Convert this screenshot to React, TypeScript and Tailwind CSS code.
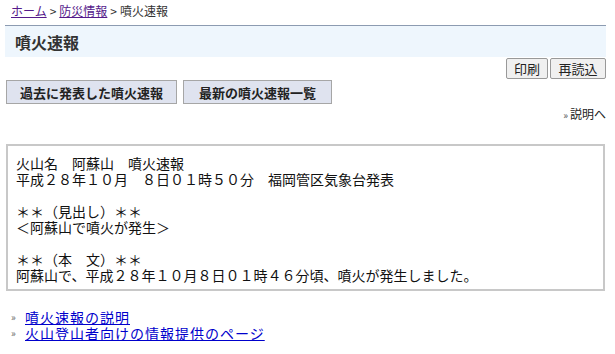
import React from "react";

const jp = "font-['Noto_Sans_CJK_JP','Noto_Sans',sans-serif]";

const App: React.FC = () => {
  return (
    <div className={`w-[615px] h-[354px] bg-white overflow-hidden ${jp}`}>
      <div className="w-[601px] ml-[5px]">
        {/* breadcrumb */}
        <div className="h-[25px] pt-[3px] pl-[6px] text-[12px] leading-[16px] text-[#333]">
          <a href="#" className="text-[#551a8b] underline">ホーム</a>
          <span className="mx-[3px]">&gt;</span>
          <a href="#" className="text-[#551a8b] underline">防災情報</a>
          <span className="mx-[3px]">&gt;</span>
          <span>噴火速報</span>
        </div>

        {/* title */}
        <div className="h-[32px] border-t border-[#8c9bb1] bg-[#eef6fd] flex items-center pl-[10px]">
          <h1 className="text-[16px] font-bold text-[#333] leading-none">噴火速報</h1>
        </div>

        {/* print / reload */}
        <div className="flex justify-end gap-[2px] mt-[1px]">
          <button className="h-[21px] w-[42px] border border-[#999] bg-[#f0f0f0] text-[13px] leading-none text-[#222] rounded-[2px]">
            印刷
          </button>
          <button className="h-[21px] w-[56px] border border-[#999] bg-[#f0f0f0] text-[13px] leading-none text-[#222] rounded-[2px]">
            再読込
          </button>
        </div>

        {/* history buttons */}
        <div className="flex gap-[6px] mt-[1px] ml-[1px]">
          <button className="h-[24px] w-[171px] border border-[#a6a6a6] bg-[#dfe3ef] text-[13px] font-bold leading-none text-[#222]">
            過去に発表した噴火速報
          </button>
          <button className="h-[24px] w-[149px] border border-[#a6a6a6] bg-[#dfe3ef] text-[13px] font-bold leading-none text-[#222]">
            最新の噴火速報一覧
          </button>
        </div>

        <div className="flex justify-end items-center mt-[2px] h-[16px] text-[12px] text-[#222]">
          <span className="text-[10px] text-[#555] mr-[2px]">»</span>
          <span>説明へ</span>
        </div>

        {/* bulletin */}
        <div className="mt-[22px] ml-[1px] w-[599px] h-[147px] border-2 border-[#c8c8c8] pt-[9px] pl-[8px] text-[14px] leading-[16px] text-[#111] whitespace-pre">
          <p>火山名　阿蘇山　噴火速報</p>
          <p>平成２８年１０月　８日０１時５０分　福岡管区気象台発表</p>
          <p>&nbsp;</p>
          <p>＊＊（見出し）＊＊</p>
          <p>＜阿蘇山で噴火が発生＞</p>
          <p>&nbsp;</p>
          <p>＊＊（本　文）＊＊</p>
          <p>阿蘇山で、平成２８年１０月８日０１時４６分頃、噴火が発生しました。</p>
        </div>

        {/* links */}
        <ul className="mt-[18px] ml-[6px] text-[14px] leading-[16px] tracking-[1px]">
          <li className="flex items-center">
            <span className="text-[10px] text-[#666] w-[14px]">»</span>
            <a href="#" className="text-[#0000cc] underline">噴火速報の説明</a>
          </li>
          <li className="flex items-center">
            <span className="text-[10px] text-[#666] w-[14px]">»</span>
            <a href="#" className="text-[#0000cc] underline">火山登山者向けの情報提供のページ</a>
          </li>
        </ul>
      </div>
    </div>
  );
};

export default App;
